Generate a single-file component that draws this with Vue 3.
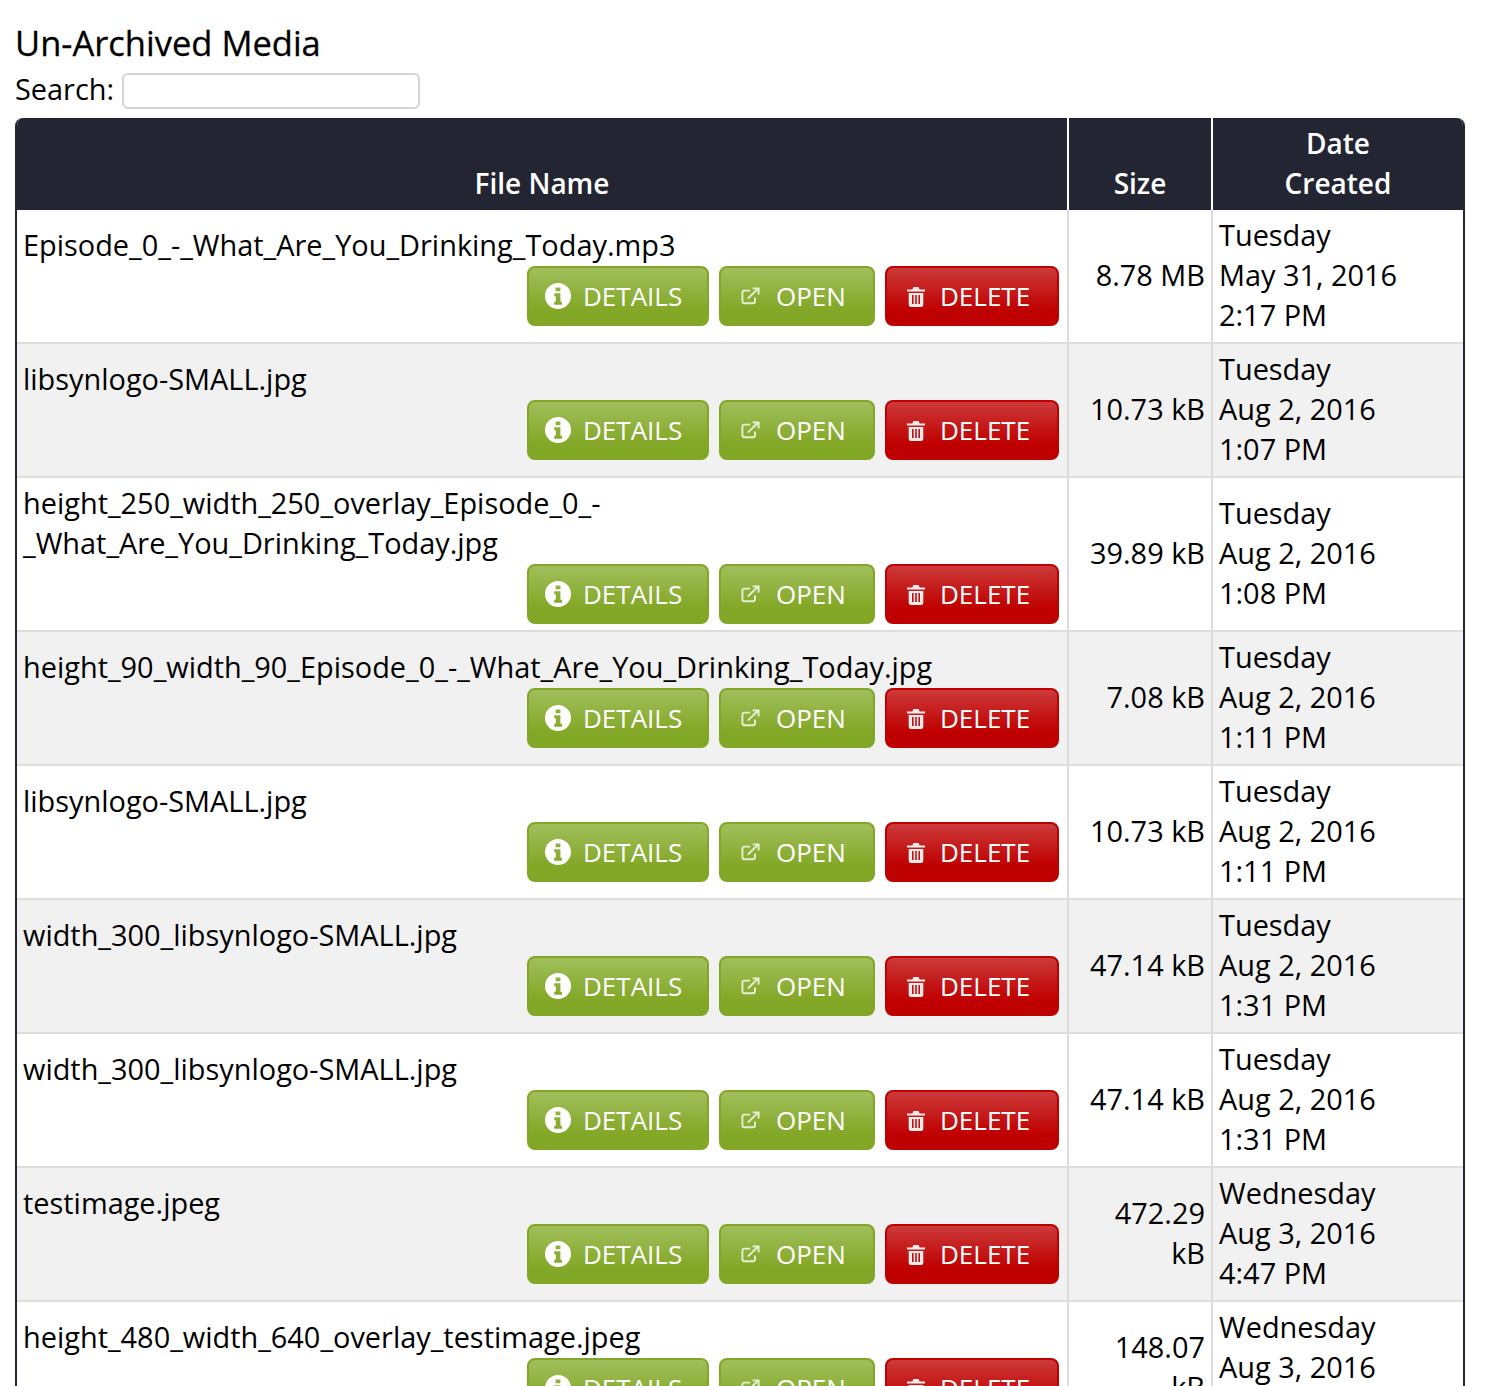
<script setup>
const rows = [
  { name: 'Episode_0_-_What_Are_You_Drinking_Today.mp3', size: '8.78 MB', day: 'Tuesday', date: 'May 31, 2016', time: '2:17 PM' },
  { name: 'libsynlogo-SMALL.jpg', size: '10.73 kB', day: 'Tuesday', date: 'Aug 2, 2016', time: '1:07 PM' },
  { name: 'height_250_width_250_overlay_Episode_0_-_What_Are_You_Drinking_Today.jpg', size: '39.89 kB', day: 'Tuesday', date: 'Aug 2, 2016', time: '1:08 PM' },
  { name: 'height_90_width_90_Episode_0_-_What_Are_You_Drinking_Today.jpg', size: '7.08 kB', day: 'Tuesday', date: 'Aug 2, 2016', time: '1:11 PM' },
  { name: 'libsynlogo-SMALL.jpg', size: '10.73 kB', day: 'Tuesday', date: 'Aug 2, 2016', time: '1:11 PM' },
  { name: 'width_300_libsynlogo-SMALL.jpg', size: '47.14 kB', day: 'Tuesday', date: 'Aug 2, 2016', time: '1:31 PM' },
  { name: 'width_300_libsynlogo-SMALL.jpg', size: '47.14 kB', day: 'Tuesday', date: 'Aug 2, 2016', time: '1:31 PM' },
  { name: 'testimage.jpeg', size: '472.29 kB', day: 'Wednesday', date: 'Aug 3, 2016', time: '4:47 PM' },
  { name: 'height_480_width_640_overlay_testimage.jpeg', size: '148.07 kB', day: 'Wednesday', date: 'Aug 3, 2016', time: '4:48 PM' },
]
</script>

<template>
  <div class="page">
    <h2 class="title">Un-Archived Media</h2>
    <div class="search">
      <label for="q">Search:</label>
      <input id="q" type="text" />
    </div>
    <div class="wrap">
      <table>
        <colgroup>
          <col class="c1" />
          <col class="c2" />
          <col class="c3" />
        </colgroup>
        <thead>
          <tr>
            <th>File Name</th>
            <th>Size</th>
            <th>Date<br />Created</th>
          </tr>
        </thead>
        <tbody>
          <tr v-for="(r, i) in rows" :key="i">
            <td class="name">
              <div class="fname">{{ r.name }}</div>
              <div class="actions">
                <a class="btn green details">
                  <svg class="ic-info" viewBox="0 0 26 26">
                    <path fill-rule="evenodd" fill="#fff" d="M13 0a13 13 0 1 0 0 26a13 13 0 0 0 0-26zM10.6 4.4h4.8v3.8h-4.8zM9.2 10.2h6.2v8.6h1.6v3h-7.8v-3h1.6v-5.6h-1.6z" />
                  </svg>
                  <span>DETAILS</span>
                </a>
                <a class="btn green open">
                  <svg class="ic-open" viewBox="0 0 19 18" fill="none" stroke="#fff" stroke-opacity=".8" stroke-width="1.9">
                    <path d="M9 3.6H3.4a2 2 0 0 0-2 2v8.6a2 2 0 0 0 2 2H12a2 2 0 0 0 2-2V10.5" />
                    <path d="M6.8 11.6L16.6 2M11.6 1.4h6v6" />
                  </svg>
                  <span>OPEN</span>
                </a>
                <a class="btn red del">
                  <svg class="ic-trash" viewBox="0 0 18 20">
                    <path fill="#fff" fill-opacity=".92" fill-rule="evenodd" d="M6.5 0h5l1.2 2.6H18v2H0v-2h5.3zM1.7 6h14.6v11.5a2.5 2.5 0 0 1-2.5 2.5H4.2a2.5 2.5 0 0 1-2.5-2.5zM5 8v9h1.6V8zM8.2 8v9h1.6V8zM11.4 8v9H13V8z" />
                  </svg>
                  <span>DELETE</span>
                </a>
              </div>
            </td>
            <td class="size">{{ r.size }}</td>
            <td class="date">
              <div>{{ r.day }}</div>
              <div>{{ r.date }}</div>
              <div>{{ r.time }}</div>
            </td>
          </tr>
        </tbody>
      </table>
    </div>
  </div>
</template>

<style>
html, body {
  margin: 0;
  height: 1386px;
  overflow: hidden;
  background: #fff;
}
</style>

<style scoped>
.page {
  height: 1386px;
  overflow: hidden;
  box-sizing: border-box;
  padding: 24px 20px 0 15px;
  font-family: "Open Sans", "Noto Sans", sans-serif;
  font-size: 28.9px;
  line-height: 40px;
  color: #000;
}
.title {
  margin: 0;
  font-size: 34.5px;
  font-weight: 400;
  line-height: 38px;
  padding-bottom: 1px;
  -webkit-text-stroke: 0.3px #000;
}
.search {
  display: flex;
  align-items: center;
  height: 36px;
  margin-top: 10px;
  margin-bottom: 9px;
}
.search label {
  width: 107px;
  flex: none;
  padding-bottom: 4px;
}
.search input {
  box-sizing: border-box;
  width: 298px;
  height: 36px;
  padding: 0 6px;
  border: 2px solid #d4d4d4;
  border-radius: 6px;
  background: #fff;
  outline: none;
}
.wrap {
  width: 1450px;
  box-sizing: border-box;
  border-left: 2px solid #232632;
  border-right: 2px solid #232632;
  border-radius: 8px 8px 0 0;
  overflow: hidden;
}
table {
  width: 1446px;
  table-layout: fixed;
  border-collapse: separate;
  border-spacing: 0;
}
.c1 { width: 1052px; }
.c2 { width: 144px; }
.c3 { width: 250px; }
th {
  background: #232632;
  color: #fff;
  font-size: 28px;
  font-weight: 600;
  padding: 5px 6px 7px;
  text-align: center;
  vertical-align: bottom;
  border-right: 2px solid #fff;
}
th:last-child { border-right: none; }
td {
  padding: 6px;
  vertical-align: middle;
  border-right: 2px solid #ddd;
  border-bottom: 2px solid #ddd;
}
td:last-child { border-right: none; }
td.size, td.date { padding-top: 5px; padding-bottom: 7px; }
tbody tr:nth-child(even) td { background: #f1f1f1; }
.name { text-align: left; }
.fname { margin: -1px 0 1px; }
.actions {
  display: flex;
  justify-content: flex-end;
  gap: 10px;
  padding-right: 2px;
}
.btn {
  box-sizing: border-box;
  display: flex;
  align-items: center;
  height: 60px;
  border-radius: 8px;
  color: #fff;
  font-size: 26px;
  line-height: 1;
}
.green {
  border: 2px solid #82a626;
  background: linear-gradient(to bottom, #a0bf5c 0%, #83a726 75%, #82a625 100%);
}
.red {
  border: 2px solid #c00000;
  background: linear-gradient(to bottom, #cc3a3a 0%, #bf0000 75%, #bd0000 100%);
}
.details { width: 182px; padding-left: 16px; }
.open { width: 156px; padding-left: 20px; }
.del { width: 174px; padding-left: 20px; }
.ic-info { width: 26px; height: 26px; margin-right: 12px; flex: none; }
.ic-open { width: 19px; height: 18px; margin-right: 16px; flex: none; }
.ic-trash { width: 18px; height: 20px; margin-right: 15px; margin-top: 2px; flex: none; }
.size { text-align: right; }
.date { text-align: left; }
</style>
